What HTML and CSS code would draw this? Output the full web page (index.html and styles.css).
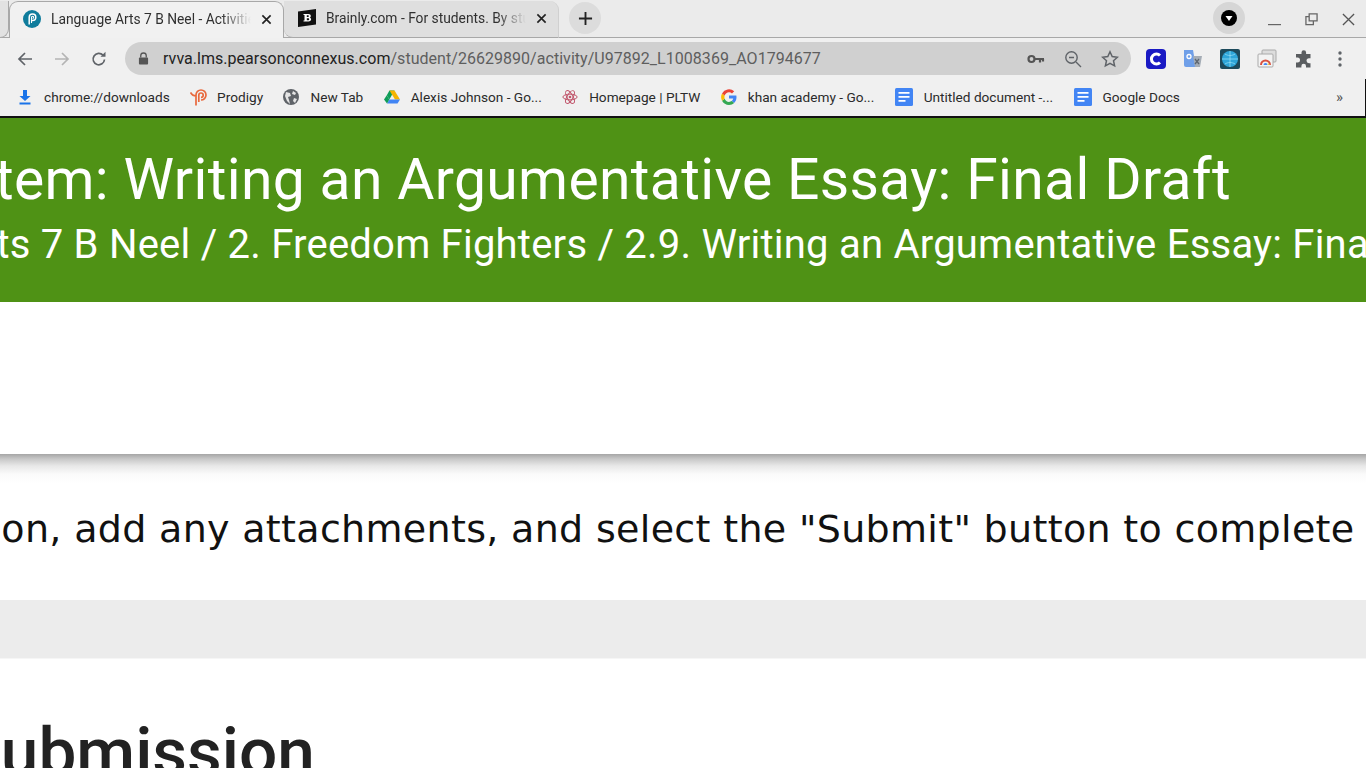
FILE: index.html
```html
<!DOCTYPE html>
<html lang="en">
<head>
<meta charset="utf-8">
<title>Language Arts 7 B Neel - Activities</title>
<link rel="stylesheet" href="styles.css">
</head>
<body>
<header class="chrome">
  <div class="tabstrip">
    <div class="tab-stub"></div>
    <div class="tab tab-active">
      <svg class="favicon" viewBox="0 0 18 18"><circle cx="9" cy="9" r="9" fill="#0f7c9c"/><path d="M6.200 14.500V7.200a3.300 3.300 0 1 1 3.300 3.400H8.800" fill="none" stroke="#fff" stroke-width="1.500"/><path d="M8.500 13V7.300a1.100 1.100 0 1 1 1.100 1.100" fill="none" stroke="#fff" stroke-width="1.100"/></svg>
      <span class="tab-title">Language Arts 7 B Neel - Activities</span>
      <svg class="tab-close" viewBox="0 0 12 12"><path d="M1.500 1.500l9 9M10.500 1.500l-9 9" stroke="#222" stroke-width="1.800"/></svg>
    </div>
    <div class="tab tab-idle">
      <svg class="favicon" viewBox="0 0 18 18"><path d="M0 2.500L18 0v15.500L0 18z" fill="#111"/><path d="M5.500 5h5c1.500 0 2.300.8 2.300 1.900 0 .8-.5 1.400-1.200 1.600.9.200 1.500.9 1.500 1.800 0 1.300-1 2.200-2.600 2.200h-5v-1h1V6h-1zM8.800 6.300v1.700h1.200c.6 0 .9-.3.900-.9s-.3-.8-.9-.8zM8.800 9.300v2h1.400c.7 0 1-.4 1-1s-.3-1-1-1z" fill="#fff"/></svg>
      <span class="tab-title">Brainly.com - For students. By students.</span>
      <svg class="tab-close" viewBox="0 0 12 12"><path d="M1.500 1.500l9 9M10.500 1.500l-9 9" stroke="#222" stroke-width="1.800"/></svg>
    </div>
    <div class="newtab"><svg viewBox="0 0 16 16"><path d="M8 1v14M1 8h14" stroke="#222" stroke-width="2"/></svg></div>
    <div class="strip-spacer"></div>
    <div class="profile"><svg viewBox="0 0 16 16"><circle cx="8" cy="8" r="8" fill="#000"/><path d="M4.500 6h7L8 11z" fill="#fff"/></svg></div>
    <div class="winbtns">
      <svg viewBox="0 0 14 14"><path d="M0 12.500h14" stroke="#666" stroke-width="1.300"/></svg>
      <svg viewBox="0 0 14 14"><path d="M4.500 1h8.500v7.500H4.500zM4.500 4H1v8.500h8V8.500" fill="none" stroke="#666" stroke-width="1.400"/></svg>
      <svg viewBox="0 0 14 14"><path d="M1 1l12 12M13 1L1 13" stroke="#555" stroke-width="1.400"/></svg>
    </div>
  </div>
  <div class="toolbar">
    <svg class="nav" viewBox="0 0 16 16"><path d="M15 8H2M8 2L2 8l6 6" fill="none" stroke="#5f6368" stroke-width="1.700"/></svg>
    <svg class="nav" viewBox="0 0 16 16"><path d="M1 8h13M8 2l6 6-6 6" fill="none" stroke="#b4b4b4" stroke-width="1.700"/></svg>
    <svg class="nav" viewBox="0 0 16 16"><path d="M13.500 8.500A5.700 5.700 0 1 1 12 4.200" fill="none" stroke="#5f6368" stroke-width="1.700"/><path d="M9.500 5.700h5v-5z" fill="#5f6368"/></svg>
    <div class="omnibox">
      <svg class="lock" viewBox="0 0 12 14"><path d="M3 6V4a3 3 0 0 1 6 0v2" fill="none" stroke="#555" stroke-width="1.400"/><rect x="1" y="6" width="10" height="7.500" rx="1" fill="#555"/></svg>
      <span class="url"><b class="host">rvva.lms.pearsonconnexus.com</b>/student/26629890/activity/U97892_L1008369_AO1794677</span>
      <svg class="omni-icon" viewBox="0 0 18 18"><circle cx="4.500" cy="9" r="3" fill="none" stroke="#555" stroke-width="2.200"/><path d="M7 9h10M13 9v3.500M16 9v2.500" stroke="#555" stroke-width="2.200"/></svg>
      <svg class="omni-icon" viewBox="0 0 18 18"><circle cx="7.500" cy="7.500" r="5.700" fill="none" stroke="#5f6368" stroke-width="1.400"/><path d="M12 12l5 5M5 7.500h5" stroke="#5f6368" stroke-width="1.400"/></svg>
      <svg class="omni-icon" viewBox="0 0 18 18"><path d="M9 1.800l2.200 4.800 5.200.6-3.900 3.500 1.100 5.200L9 13.300l-4.600 2.600 1.100-5.200L1.600 7.200l5.200-.6z" fill="none" stroke="#5f6368" stroke-width="1.500"/></svg>
    </div>
    <div class="exts">
      <svg viewBox="0 0 20 20"><rect width="20" height="20" rx="4" fill="#1a1ac4"/><path d="M14 6.500A5 5 0 1 0 14 13.500" fill="none" stroke="#fff" stroke-width="3"/></svg>
      <svg viewBox="0 0 20 20"><path d="M1 1h9l3 17H3a2 2 0 0 1-2-2z" fill="#6f9fe8"/><path d="M10 7h9l-2 11h-5z" fill="#a5adb6"/><circle cx="6" cy="7.500" r="2" fill="none" stroke="#fff" stroke-width="1.300"/><path d="M12 10l4 5M16 10l-4 5" stroke="#5d6670" stroke-width="1.300"/></svg>
      <svg viewBox="0 0 20 20"><rect width="20" height="20" rx="2" fill="#1d4a5c"/><circle cx="10" cy="10" r="8" fill="#2ea5d8"/><path d="M2 10h16M10 2v16M5 5c3 2 7 2 10 0M5 15c3-2 7-2 10 0" fill="none" stroke="#8fdcf5" stroke-width=".8"/></svg>
      <svg viewBox="0 0 20 20"><rect x="5" y="1" width="14" height="12" rx="1" fill="#ddd" stroke="#aaa"/><rect x="1" y="5" width="15" height="13" rx="1" fill="#f3f3f3" stroke="#aaa"/><path d="M4 16a4.500 4.500 0 0 1 9 0" fill="none" stroke="#d8503f" stroke-width="2"/><path d="M10.500 16a2 2 0 0 0-4 0" fill="#4285f4"/><path d="M11 14l2 2h-2.500z" fill="#e8c84a"/></svg>
      <svg viewBox="0 0 20 20"><path d="M7.500 3.500a2.300 2.300 0 0 1 4.600 0V5h4.400v4.200H15a2.500 2.500 0 0 0 0 5h1.500V18.500H12V17a2.300 2.300 0 0 0-4.600 0v1.500H2v-5h1.500a2.500 2.500 0 0 0 0-5H2V5h5.500z" fill="#5a5d60"/></svg>
      <svg class="ext-menu" viewBox="0 0 4 16"><circle cx="2" cy="2" r="1.700" fill="#5f6368"/><circle cx="2" cy="8" r="1.700" fill="#5f6368"/><circle cx="2" cy="14" r="1.700" fill="#5f6368"/></svg>
    </div>
  </div>
  <nav class="bookmarks">
    <a class="bm"><svg viewBox="0 0 16 16"><path d="M6 1h4v6h3.500L8 12 2.500 7H6z" fill="#1a73e8"/><rect x="2.500" y="13.500" width="11" height="2" fill="#1a73e8"/></svg>chrome://downloads</a>
    <a class="bm"><svg class="bm-prodigy" viewBox="0 0 18 18"><path d="M6 17.500V7a5 5 0 1 1 5 5M8.800 14V7.200a2.200 2.200 0 1 1 2.200 2.200M.5 4.500c1.500 2.800 3 3.500 5.500 3.500" fill="none" stroke="#e8683c" stroke-width="1.700"/></svg>Prodigy</a>
    <a class="bm"><svg viewBox="0 0 16 16"><circle cx="8" cy="8" r="8" fill="#5f6368"/><path d="M3 3l4 1 1 3-3 1 1 3 1 4-3-3-2-5zM10 2l3 2-1 2-3-1zM11 9l3 1-2 4-2-2z" fill="#e4e4e4"/></svg>New Tab</a>
    <a class="bm"><svg viewBox="0 0 16 16"><path d="M5.500 1.500h5L5.300 10.500 2.800 6.200z" fill="#0f9d58"/><path d="M10.500 1.500L16 10.500h-5L5.500 1.500z" fill="#f4b400"/><path d="M16 10.500l-2.500 4H3l2.300-4z" fill="#4285f4"/><path d="M2.800 6.200l2.500 4.300L3 14.500 0 10.500z" fill="#0f9d58"/></svg>Alexis Johnson - Go...</a>
    <a class="bm"><svg viewBox="0 0 18 18"><g fill="none" stroke="#c0546a" stroke-width="1.100"><ellipse cx="9" cy="9" rx="8" ry="3.200"/><ellipse cx="9" cy="9" rx="8" ry="3.200" transform="rotate(60 9 9)"/><ellipse cx="9" cy="9" rx="8" ry="3.200" transform="rotate(120 9 9)"/></g><circle cx="9" cy="9" r="1.500" fill="#c0546a"/></svg>Homepage | PLTW</a>
    <a class="bm"><svg viewBox="0 0 16 16"><path d="M15.500 8.200c0-.6-.1-1.100-.2-1.600H8v3h4.200a3.600 3.600 0 0 1-1.600 2.400l2.500 1.900c1.500-1.300 2.400-3.300 2.400-5.700z" fill="#4285f4"/><path d="M8 16c2.100 0 3.900-.7 5.100-1.900L10.600 12.100c-.7.500-1.600.8-2.600.8-2 0-3.700-1.400-4.300-3.200L1 11.700C2.300 14.300 5 16 8 16z" fill="#34a853"/><path d="M3.700 9.700a4.800 4.800 0 0 1 0-3.100L1 4.500a8 8 0 0 0 0 7.200z" fill="#fbbc05"/><path d="M8 3.200c1.200 0 2.200.4 3 1.200l2.200-2.200A8 8 0 0 0 1 4.500l2.700 2.100C4.300 4.600 6 3.200 8 3.200z" fill="#ea4335"/></svg>khan academy - Go...</a>
    <a class="bm bm-doc"><svg viewBox="0 0 18 18"><rect width="18" height="18" rx="1.500" fill="#4285f4"/><path d="M3.500 4.800h11M3.500 8.800h11M3.500 12.800h7" stroke="#fff" stroke-width="1.800"/></svg>Untitled document -...</a>
    <a class="bm bm-doc"><svg viewBox="0 0 18 18"><rect width="18" height="18" rx="1.500" fill="#4285f4"/><path d="M3.500 4.800h11M3.500 8.800h11M3.500 12.800h7" stroke="#fff" stroke-width="1.800"/></svg>Google Docs</a>
    <span class="bm-more">»</span>
  </nav>
</header>
<main class="page">
  <section class="banner">
    <h1 class="banner-title">Item: Writing an Argumentative Essay: Final Draft</h1>
    <p class="banner-crumb">Language Arts 7 B Neel / 2. Freedom Fighters / 2.9. Writing an Argumentative Essay: Final Draft</p>
  </section>
  <div class="blank"></div>
  <p class="instructions"><span class="instructions-text">Type your submission, add any attachments, and select the "Submit" button to complete this activity.</span></p>
  <div class="band"></div>
  <h2 class="submission"><span>Submission</span></h2>
</main>
</body>
</html>
```
FILE: styles.css
```css
* { box-sizing: border-box; }
html, body { margin: 0; padding: 0; height: 768px; overflow: hidden; background: #fff; }
body { font-family: Roboto, "Liberation Sans", sans-serif; width: 1366px; }

.chrome { background: #f0f0f0; height: 118px; border-bottom: 2px solid #111; }

.tabstrip { display: flex; align-items: flex-end; height: 38px; background: #ebebeb; border-bottom: 1px solid #a8a8a8; }
.tab-stub { width: 9px; height: 37px; background: #e2e2e2; border-bottom: 1px solid #a8a8a8; border-right: 1px solid #a8a8a8; border-radius: 0 0 9px 0; margin-bottom: -1px; }
.tab { display: flex; align-items: center; height: 37px; font-size: 13.8px; color: #303030; margin-bottom: -1px; }
.tab-active { width: 275px; background: #f1f1f1; border-radius: 9px 9px 0 0; padding: 0 11px 2px 13px; border: 1px solid #a8a8a8; border-bottom: none; }
.tab-idle { width: 275px; background: #dfdfdf; border-radius: 0 9px 0 9px; padding: 0 11px 2px 14px; border-bottom: 1px solid #a8a8a8; border-right: 1px solid #d0d0d0; }
.favicon { width: 18px; height: 18px; flex: none; margin-right: 10px; }
.tab-title { flex: 1; white-space: nowrap; overflow: hidden; -webkit-mask-image: linear-gradient(to right, #000 85%, transparent 100%); mask-image: linear-gradient(to right, #000 85%, transparent 100%); }
.tab-close { width: 11px; height: 11px; flex: none; margin-left: 10px; }
.newtab { width: 32px; height: 32px; border-radius: 50%; background: #dcdcdc; display: flex; align-items: center; justify-content: center; margin: 0 0 3px 10px; }
.newtab svg { width: 15px; height: 15px; }
.strip-spacer { flex: 1; }
.profile { width: 32px; height: 32px; border-radius: 50%; background: #d6d6d6; display: flex; align-items: center; justify-content: center; margin: 0 23px 3px 0; }
.profile svg { width: 16px; height: 16px; }
.winbtns { display: flex; gap: 24px; align-items: center; height: 36px; padding-right: 11px; }
.winbtns svg { width: 13px; height: 13px; }

.toolbar { display: flex; align-items: center; height: 41px; padding: 0 0 0 17px; }
.nav { width: 16px; height: 16px; flex: none; margin-right: 21px; }
.omnibox { display: flex; align-items: center; width: 1006px; height: 33px; background: #d0d0d0; border-radius: 17px; margin: 0 0 0 -3px; padding: 0 12px 0 13px; }
.lock { width: 11px; height: 13px; flex: none; margin-right: 14px; }
.url { flex: 1; font-size: 16px; color: #5e5e5e; white-space: nowrap; letter-spacing: .035px; }
.host { font-weight: 400; color: #222; }
.omni-icon { width: 18px; height: 18px; flex: none; margin-left: 19px; }
.exts { display: flex; align-items: center; margin-left: 15px; gap: 17px; }
.exts svg { width: 20px; height: 20px; flex: none; }
.exts .ext-menu { width: 4px; height: 16px; margin-left: 7px; }

.bookmarks { display: flex; align-items: center; height: 37px; padding: 0 0 2px 17px; font-size: 13.65px; color: #2b2b2b; white-space: nowrap; border-right: 1px solid #111; }
.bm { display: flex; align-items: center; margin-right: 20.4px; }
.bm svg { width: 16px; height: 16px; margin-right: 11px; flex: none; }
.bm .bm-prodigy { width: 18px; height: 18px; margin-right: 9px; }
.bm-doc svg { width: 18px; height: 18px; }
.bm-more { margin-left: auto; margin-right: 22px; color: #555; font-size: 15px; }

.banner { background: #4f9215; height: 184px; color: #fff; overflow: hidden; padding-top: 30px; }
.banner-title { display: flex; justify-content: flex-end; margin: 0; padding-right: 135px; font-size: 57px; font-weight: 400; line-height: 64px; white-space: nowrap; letter-spacing: .35px; }
.banner-crumb { margin: 8px 0 0 -232px; font-size: 40px; line-height: 50px; white-space: nowrap; letter-spacing: .23px; }

.blank { height: 152px; background: #fff; }

.instructions { height: 146px; margin: 0; padding-top: 4px; display: flex; align-items: center; overflow: hidden; font-family: "DejaVu Sans", Verdana, sans-serif; font-size: 38px; letter-spacing: .32px; color: #111; white-space: nowrap; background: linear-gradient(to bottom, #a6a6a6 0, #c8c8c8 5px, #e8e8e8 12px, #fafafa 20px, #fff 30px); }
.instructions-text { margin-left: -367px; }

.band { height: 59px; background: #ececec; border-bottom: 1px solid #f6f6f6; }

.submission { margin: 0; height: 109px; overflow: hidden; display: flex; font-size: 67.5px; font-weight: 500; color: #222; padding-top: 53px; line-height: 80px; }
.submission span { margin-left: -40px; }
```
